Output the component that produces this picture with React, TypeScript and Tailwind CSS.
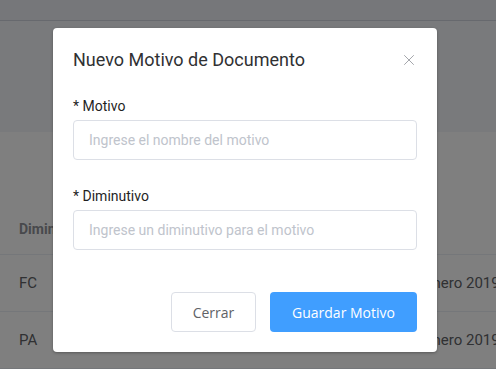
import { X } from "lucide-react";

const rows = [
  { code: "FC", date: "Enero 2019, 10:24" },
  { code: "PA", date: "Enero 2019, 10:24" },
];

function BackgroundPage() {
  return (
    <div className="flex h-[369px] w-[496px] flex-col overflow-hidden bg-[#f3f4f9] font-['Roboto',sans-serif]">
      {/* top bar */}
      <div className="h-[21px] border-b border-[#cfd2dc] bg-[#eceef5]" />
      <div className="h-[114px]" />
      {/* table card */}
      <div className="flex-1 bg-white text-[14px]">
        <div className="h-[72px]" />
        <div className="flex h-[51px] items-center border-b border-[#ebeef5] pl-[19px] font-bold text-[#909399]">
          Diminutivo
        </div>
        {rows.map((r) => (
          <div
            key={r.code}
            className="flex h-[57px] items-center border-b border-[#ebeef5] text-[15px] text-[#606266]"
          >
            <span className="w-[424px] shrink-0 pl-[19px]">{r.code}</span>
            <span className="shrink-0 whitespace-nowrap">{r.date}</span>
          </div>
        ))}
      </div>
    </div>
  );
}

function Field({ label, placeholder }: { label: string; placeholder: string }) {
  return (
    <div className="flex flex-col">
      <label className="mb-[4px] h-[21px] text-[14px] leading-[22px] text-[#1f1f1f]">
        * {label}
      </label>
      <input
        type="text"
        placeholder={placeholder}
        className="h-[40px] w-full rounded-[4px] border border-[#dcdfe6] bg-white px-[15px] text-[14px] text-[#606266] outline-none placeholder:text-[#c0c4cc]"
      />
    </div>
  );
}

export default function App() {
  return (
    <div className="relative h-[369px] w-[496px] overflow-hidden">
      <BackgroundPage />

      {/* overlay */}
      <div className="absolute inset-0 bg-black/50" />

      {/* dialog */}
      <div className="absolute left-[53px] top-[28px] w-[384px] rounded-[4px] bg-white font-['Roboto',sans-serif] shadow-[0_1px_3px_rgba(0,0,0,0.3)]">
        <div className="flex items-center justify-between px-[20px] pb-[10px] pt-[20px]">
          <span className="text-[18px] leading-[24px] text-[#303133]">
            Nuevo Motivo de Documento
          </span>
          <button type="button" className="mr-[-1px] text-[#909399]" aria-label="Cerrar">
            <X size={18} strokeWidth={1.1} />
          </button>
        </div>

        <div className="flex flex-col gap-[25px] px-[20px] pt-[13px]">
          <Field label="Motivo" placeholder="Ingrese el nombre del motivo" />
          <Field label="Diminutivo" placeholder="Ingrese un diminutivo para el motivo" />
        </div>

        <div className="flex justify-end gap-[14px] px-[20px] pb-[20px] pt-[42px] font-['Open_Sans',sans-serif] text-[14px]">
          <button
            type="button"
            className="h-[40px] w-[85px] rounded-[4px] border border-[#dcdfe6] bg-white text-[#606266]"
          >
            Cerrar
          </button>
          <button
            type="button"
            className="h-[40px] w-[147px] rounded-[4px] bg-[#409eff] text-white"
          >
            Guardar Motivo
          </button>
        </div>
      </div>
    </div>
  );
}
